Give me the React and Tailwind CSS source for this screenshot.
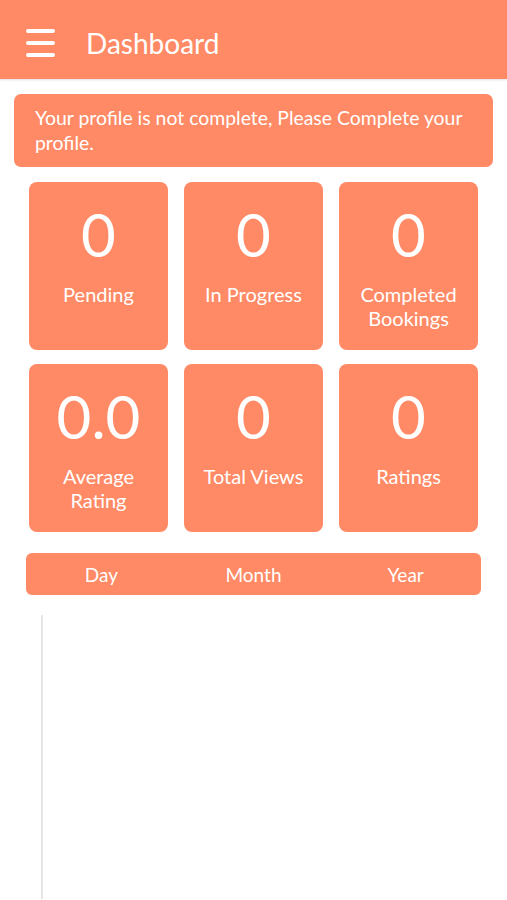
export default function App() {
  const stats = [
    { value: "0", label: "Pending" },
    { value: "0", label: "In Progress" },
    { value: "0", label: "Completed Bookings" },
    { value: "0.0", label: "Average Rating" },
    { value: "0", label: "Total Views" },
    { value: "0", label: "Ratings" },
  ];

  return (
    <div className="min-h-[900px] bg-white font-['Lato',sans-serif] text-white">
      <header className="h-[79px] bg-[#ff8a65] flex items-center pl-[26px] pt-[7px] shadow-[0_1px_2px_rgba(0,0,0,0.12)]">
        <div className="w-[29px] flex flex-col gap-[8px]">
          <span className="block h-[4px] rounded-full bg-white" />
          <span className="block h-[4px] rounded-full bg-white" />
          <span className="block h-[4px] rounded-full bg-white" />
        </div>
        <h1 className="ml-[31px] text-[28px] leading-none">Dashboard</h1>
      </header>

      <div className="mx-[14px] mt-[15px] rounded-[7px] bg-[#ff8a65] px-[21px] pt-[11px] pb-[12px] text-[19.4px] leading-[25px]">
        Your profile is not complete, Please Complete your profile.
      </div>

      <div className="ml-[29px] mr-[29px] mt-[15px] grid grid-cols-3 gap-x-[16px] gap-y-[14px]">
        {stats.map((s) => (
          <div
            key={s.label}
            className="h-[168px] rounded-[8px] bg-[#ff8a65] flex flex-col items-center pt-[21px] text-center"
          >
            <div className="text-[60px] leading-[62px]">{s.value}</div>
            <div className="mt-[17px] px-1 text-[20px] leading-[24px]">{s.label}</div>
          </div>
        ))}
      </div>

      <div className="ml-[26px] mr-[26px] mt-[21px] h-[42px] pt-[3px] rounded-[6px] bg-[#ff8a65] grid grid-cols-3 items-center text-[19px]">
        <div className="text-center pr-[1px]">Day</div>
        <div className="text-center">Month</div>
        <div className="text-center pl-[1px]">Year</div>
      </div>

      <div className="ml-[41px] mt-[20px] w-[2px] h-[284px] bg-[#e6e6e6]" />
    </div>
  );
}
